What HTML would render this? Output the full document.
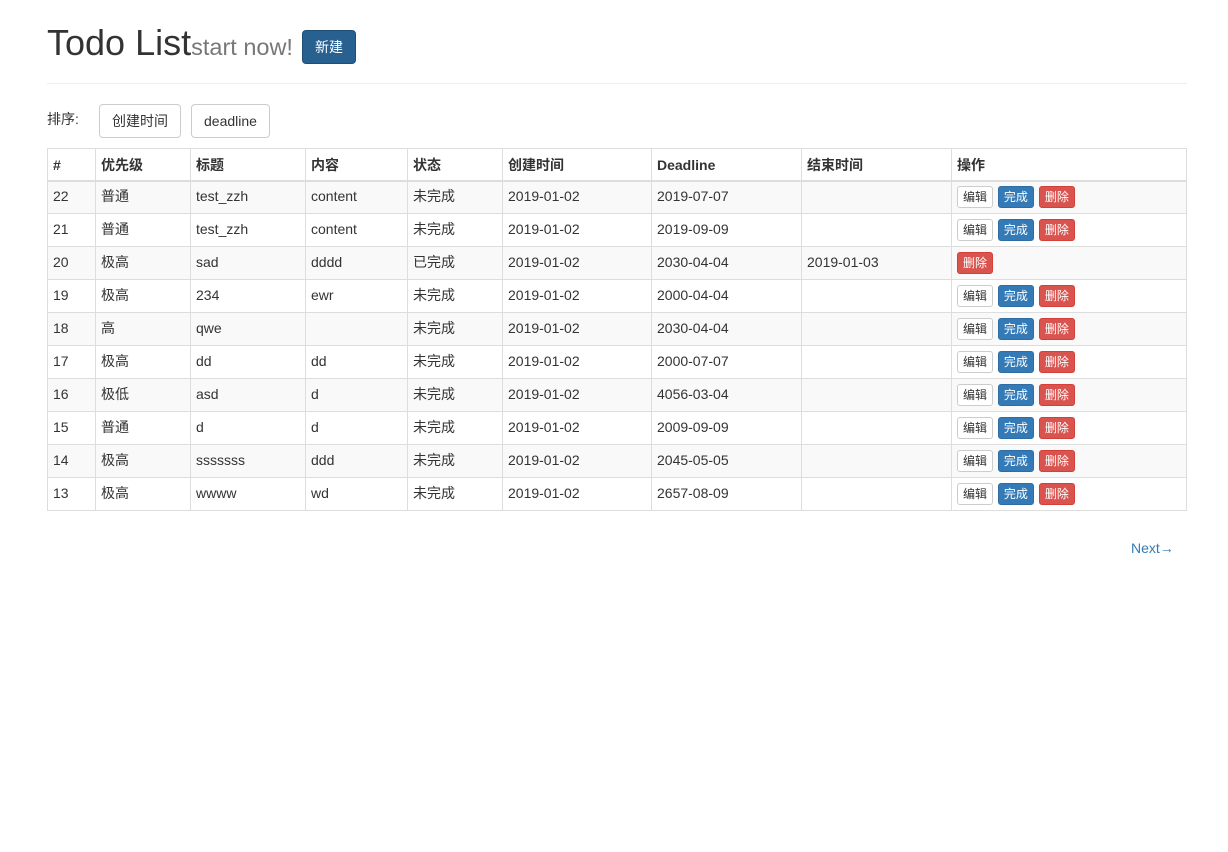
<!DOCTYPE html>
<html><head><meta charset="utf-8"><style>
*{box-sizing:border-box}
body{margin:0;font-family:"Liberation Sans","Noto Sans CJK SC",sans-serif;font-size:14px;color:#333;background:#fff;line-height:1.42857}
.wrap{position:absolute;left:47px;width:1140px;top:0}
h1{margin:0;position:absolute;top:23px;left:0;font-size:36px;font-weight:500;line-height:1.1;white-space:nowrap}
h1 small{font-size:23.5px;color:#777;font-weight:400}
.btn{display:inline-block;border:1px solid #ccc;border-radius:4px;background:#fff;color:#333;font-family:inherit;text-align:center;white-space:nowrap}
.new{position:absolute;left:255px;top:30px;height:34px;width:54px;line-height:32px;background:#286090;border-color:#204d74;color:#fff;font-size:14px}
hr{position:absolute;top:83px;left:0;width:1140px;margin:0;border:0;border-top:1px solid #eee}
.sort{position:absolute;top:104px;left:0;height:34px}
.sort span{position:absolute;top:6px;left:0;white-space:nowrap}
.sort .btn{position:absolute;top:0;height:34px;line-height:32px;padding:0 12px}
table{position:absolute;top:148px;left:0;width:1140px;border-collapse:collapse}
td,th{border:1px solid #ddd;padding:0 5px;height:33px;text-align:left;vertical-align:middle;white-space:nowrap}
th{font-weight:bold;height:32px;border-bottom:2px solid #ddd;padding-top:3px}
tbody tr:nth-child(odd){background:#f9f9f9}
.xs{height:22px;line-height:20px;padding:0 5px;font-size:12px;border-radius:3px;margin-right:1px;vertical-align:middle}
.p{background:#337ab7;border-color:#2e6da4;color:#fff}
.d{background:#d9534f;border-color:#d43f3a;color:#fff}
.next{position:absolute;top:539px;left:1084px;color:#337ab7}
</style></head><body><div class="wrap">
<h1>Todo List<small>start now!</small></h1>
<span class="btn new">新建</span>
<hr>
<div class="sort"><span>排序:</span><span class="btn" style="left:52px;top:0">创建时间</span><span class="btn" style="left:144px;top:0">deadline</span></div>
<table>
<colgroup><col style="width:48px"><col style="width:95px"><col style="width:115px"><col style="width:102px"><col style="width:95px"><col style="width:149px"><col style="width:150px"><col style="width:150px"><col></colgroup>
<thead><tr><th>#</th><th>优先级</th><th>标题</th><th>内容</th><th>状态</th><th>创建时间</th><th>Deadline</th><th>结束时间</th><th>操作</th></tr></thead>
<tbody>
<tr><td>22</td><td>普通</td><td>test_zzh</td><td>content</td><td>未完成</td><td>2019-01-02</td><td>2019-07-07</td><td></td><td><span class="btn xs">编辑</span> <span class="btn xs p">完成</span> <span class="btn xs d">删除</span></td></tr>
<tr><td>21</td><td>普通</td><td>test_zzh</td><td>content</td><td>未完成</td><td>2019-01-02</td><td>2019-09-09</td><td></td><td><span class="btn xs">编辑</span> <span class="btn xs p">完成</span> <span class="btn xs d">删除</span></td></tr>
<tr><td>20</td><td>极高</td><td>sad</td><td>dddd</td><td>已完成</td><td>2019-01-02</td><td>2030-04-04</td><td>2019-01-03</td><td><span class="btn xs d">删除</span></td></tr>
<tr><td>19</td><td>极高</td><td>234</td><td>ewr</td><td>未完成</td><td>2019-01-02</td><td>2000-04-04</td><td></td><td><span class="btn xs">编辑</span> <span class="btn xs p">完成</span> <span class="btn xs d">删除</span></td></tr>
<tr><td>18</td><td>高</td><td>qwe</td><td></td><td>未完成</td><td>2019-01-02</td><td>2030-04-04</td><td></td><td><span class="btn xs">编辑</span> <span class="btn xs p">完成</span> <span class="btn xs d">删除</span></td></tr>
<tr><td>17</td><td>极高</td><td>dd</td><td>dd</td><td>未完成</td><td>2019-01-02</td><td>2000-07-07</td><td></td><td><span class="btn xs">编辑</span> <span class="btn xs p">完成</span> <span class="btn xs d">删除</span></td></tr>
<tr><td>16</td><td>极低</td><td>asd</td><td>d</td><td>未完成</td><td>2019-01-02</td><td>4056-03-04</td><td></td><td><span class="btn xs">编辑</span> <span class="btn xs p">完成</span> <span class="btn xs d">删除</span></td></tr>
<tr><td>15</td><td>普通</td><td>d</td><td>d</td><td>未完成</td><td>2019-01-02</td><td>2009-09-09</td><td></td><td><span class="btn xs">编辑</span> <span class="btn xs p">完成</span> <span class="btn xs d">删除</span></td></tr>
<tr><td>14</td><td>极高</td><td>sssssss</td><td>ddd</td><td>未完成</td><td>2019-01-02</td><td>2045-05-05</td><td></td><td><span class="btn xs">编辑</span> <span class="btn xs p">完成</span> <span class="btn xs d">删除</span></td></tr>
<tr><td>13</td><td>极高</td><td>wwww</td><td>wd</td><td>未完成</td><td>2019-01-02</td><td>2657-08-09</td><td></td><td><span class="btn xs">编辑</span> <span class="btn xs p">完成</span> <span class="btn xs d">删除</span></td></tr>
</tbody></table>
<span class="next">Next→</span>
</div></body></html>
